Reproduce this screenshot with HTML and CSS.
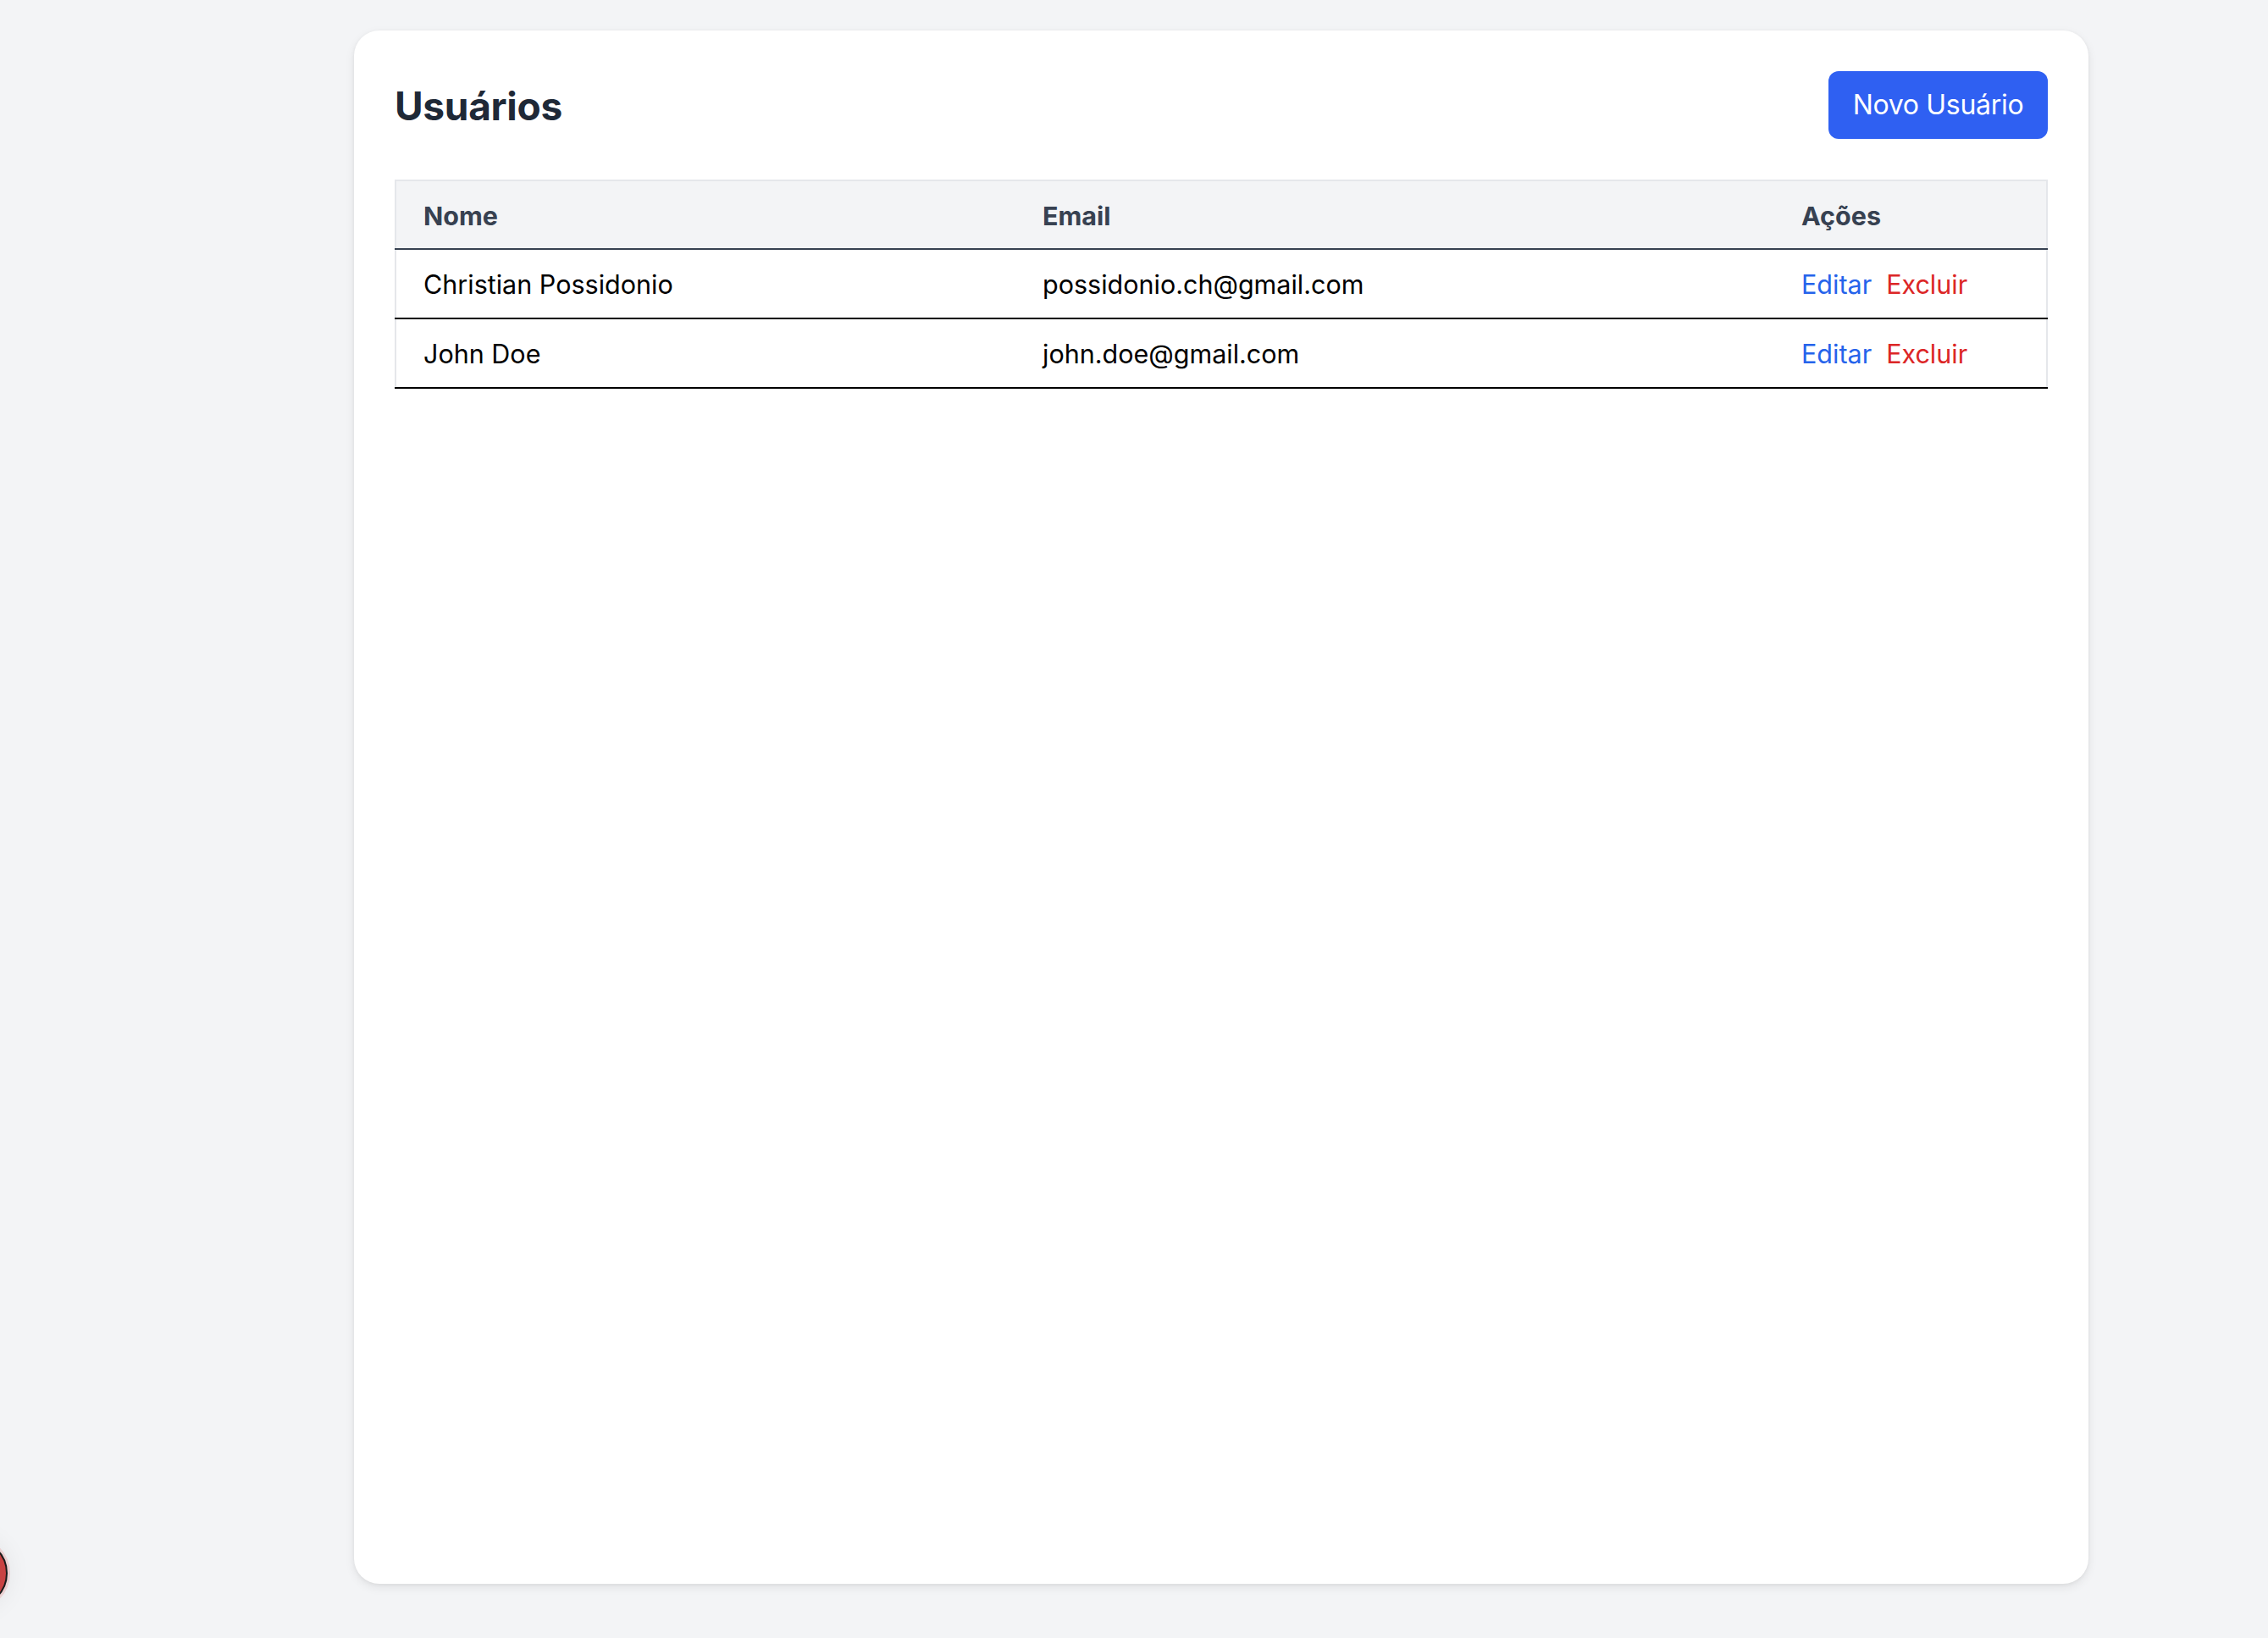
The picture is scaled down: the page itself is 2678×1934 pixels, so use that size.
FILE: index.html
```html
<!DOCTYPE html>
<html lang="pt-BR">
<head>
<meta charset="utf-8">
<title>Usuários</title>
<link rel="stylesheet" href="styles.css">
</head>
<body>
<main class="page">
  <section class="card">
    <header class="card-header">
      <h1 class="title">Usuários</h1>
      <button class="btn-primary">Novo Usuário</button>
    </header>
    <table class="users">
      <colgroup>
        <col class="col-name">
        <col class="col-email">
        <col class="col-actions">
      </colgroup>
      <thead>
        <tr>
          <th>Nome</th>
          <th>Email</th>
          <th>Ações</th>
        </tr>
      </thead>
      <tbody>
        <tr>
          <td>Christian Possidonio</td>
          <td>possidonio.ch@gmail.com</td>
          <td><button class="link edit">Editar</button><button class="link delete">Excluir</button></td>
        </tr>
        <tr>
          <td>John Doe</td>
          <td>john.doe@gmail.com</td>
          <td><button class="link edit">Editar</button><button class="link delete">Excluir</button></td>
        </tr>
      </tbody>
    </table>
  </section>
</main>
<div class="dev-badge"></div>
</body>
</html>
```

FILE: styles.css
```css
* { box-sizing: border-box; }

html, body {
  margin: 0;
  padding: 0;
  height: 100%;
}

body {
  background: #f3f4f6;
  font-family: Inter, "Noto Sans", "Liberation Sans", sans-serif;
  color: #000;
  overflow: hidden;
}

.page {
  padding: 36px 0 0 418px;
}

.card {
  width: 2048px;
  height: 1834px;
  background: #fff;
  border-radius: 30px;
  padding: 48px;
  box-shadow: 0 4px 12px rgba(0, 0, 0, 0.08), 0 1px 4px rgba(0, 0, 0, 0.05);
}

.card-header {
  display: flex;
  justify-content: space-between;
  align-items: center;
  margin-bottom: 48px;
}

.title {
  margin: 0;
  font-size: 46px;
  line-height: 64px;
  font-weight: 700;
  color: #1f2937;
  letter-spacing: -0.3px;
  position: relative;
  top: 1px;
}

.btn-primary {
  font-family: inherit;
  background: #2f60f2;
  color: #fff;
  border: 0;
  border-radius: 12px;
  height: 80px;
  width: 259px;
  font-size: 32px;
  line-height: 48px;
  padding: 0;
  letter-spacing: -0.3px;
}

.users {
  width: 100%;
  table-layout: fixed;
  border-collapse: collapse;
  border: 2px solid #e5e7eb;
  font-size: 30.5px;
}

.col-name { width: 732px; }
.col-email { width: 896px; }
.col-actions { width: 322px; }

.users th {
  background: #f3f4f6;
  text-align: left;
  font-weight: 700;
  color: #374151;
  padding: 17px 32px 14px;
  line-height: 48px;
  border-bottom: 2px solid #374151;
}

.users td {
  padding: 17px 32px 15px;
  line-height: 48px;
  border-bottom: 2px solid #000;
  color: #000;
}

.link {
  font-family: inherit;
  font-size: 30.5px;
  background: none;
  border: 0;
  padding: 0;
  line-height: 48px;
}

.edit {
  color: #2563eb;
  margin-right: 17px;
}

.delete {
  color: #dc2626;
}

.dev-badge {
  position: fixed;
  left: -72px;
  top: 1817px;
  width: 81px;
  height: 81px;
  border-radius: 50%;
  background: #c94242;
  border: 2px solid #1a1a1a;
  box-shadow: 0 0 0 3px rgba(220, 38, 38, 0.15), 0 0 30px rgba(0, 0, 0, 0.08);
}
```
